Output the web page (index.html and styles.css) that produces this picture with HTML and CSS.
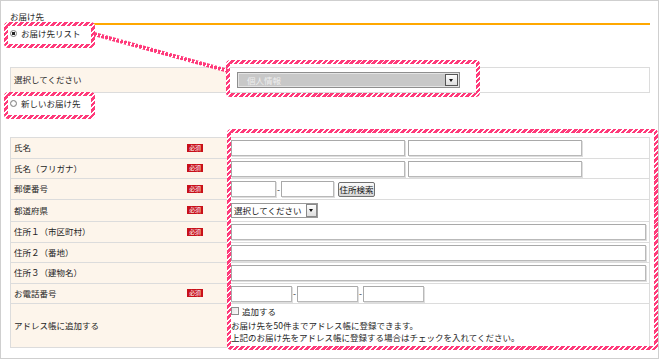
FILE: index.html
```html
<!DOCTYPE html>
<html lang="ja">
<head>
<meta charset="utf-8">
<title>お届け先</title>
<link rel="stylesheet" href="styles.css">
</head>
<body>
  <h2 class="title">お届け先</h2>

  <label class="radio-row first"><span class="radio checked"></span>お届け先リスト</label>

  <div class="grid list">
    <div class="lbl">選択してください</div>
    <div class="val list-val">
      <div class="select disabled"><span class="sel-text">個人情報</span><span class="arrow"></span></div>
    </div>
  </div>

  <label class="radio-row second"><span class="radio"></span>新しいお届け先</label>

  <div class="grid form">
    <div class="lbl">氏名<span class="req">必須</span></div>
    <div class="val"><input class="in w174" type="text"><input class="in w174" type="text"></div>

    <div class="lbl">氏名（フリガナ）<span class="req">必須</span></div>
    <div class="val"><input class="in w174" type="text"><input class="in w174" type="text"></div>

    <div class="lbl">郵便番号<span class="req">必須</span></div>
    <div class="val"><input class="in w45" type="text"><span class="dash">-</span><input class="in w53" type="text"><button class="btn" type="button">住所検索</button></div>

    <div class="lbl">都道府県<span class="req">必須</span></div>
    <div class="val tall"><div class="select pref"><span class="sel-text">選択してください</span><span class="arrow"></span></div></div>

    <div class="lbl">住所１（市区町村）<span class="req">必須</span></div>
    <div class="val"><input class="in full" type="text"></div>

    <div class="lbl">住所２（番地）</div>
    <div class="val"><input class="in full" type="text"></div>

    <div class="lbl">住所３（建物名）</div>
    <div class="val"><input class="in full" type="text"></div>

    <div class="lbl">お電話番号<span class="req">必須</span></div>
    <div class="val"><input class="in w61" type="text"><span class="dash">-</span><input class="in w61" type="text"><span class="dash">-</span><input class="in w61" type="text"></div>

    <div class="lbl">アドレス帳に追加する</div>
    <div class="val note">
      <label class="check-row"><span class="checkbox"></span>追加する</label>
      <p class="note-line first-line">お届け先を50件までアドレス帳に登録できます。</p>
      <p class="note-line">上記のお届け先をアドレス帳に登録する場合はチェックを入れてください。</p>
    </div>
  </div>

  <div class="mark box1"></div>
  <div class="mark box2"></div>
  <div class="mark box3"></div>
  <div class="mark box4"></div>
  <div class="connector"></div>
</body>
</html>
```

FILE: styles.css
```css
html, body {
  margin: 0;
}

body {
  width: 659px;
  height: 359px;
  box-sizing: border-box;
  border: 1px solid #cfcfcf;
  padding: 0 8px 0 9px;
  font-family: "Noto Sans CJK JP", "Noto Sans", sans-serif;
  font-size: 8.5px;
  color: #1e1e1e;
  background: #fff;
  overflow: hidden;
}

.title {
  margin: 0;
  padding: 10px 0 1px;
  font-size: 8.5px;
  font-weight: normal;
  line-height: 11px;
  border-bottom: 2px solid #ffa800;
}

.radio-row {
  display: flex;
  align-items: center;
  height: 11px;
  line-height: 11px;
  gap: 4px;
}

.radio-row.first {
  margin-top: 3px;
}

.radio-row.second {
  margin-top: 5px;
}

.radio {
  width: 7px;
  height: 7px;
  box-sizing: border-box;
  border: 1px solid #7e7e7e;
  border-radius: 50%;
  background: radial-gradient(circle, #fff 0 35%, #d8d8d8 100%);
  flex: none;
}

.radio.checked {
  background: radial-gradient(circle, #222 0 1.6px, #fff 2px);
}

.grid {
  display: grid;
  grid-template-columns: 217px 1fr;
  border: 1px solid #dcdcdc;
  border-bottom: 0;
}

.grid.list {
  margin-top: 28px;
}

.grid.form {
  margin-top: 28.5px;
}

.lbl {
  display: flex;
  align-items: center;
  justify-content: space-between;
  padding: 0 24px 0 3px;
  background: #fdf5eb;
  border-right: 1px solid #dcdcdc;
  border-bottom: 1px solid #dcdcdc;
  line-height: 11px;
}

.val {
  display: flex;
  align-items: center;
  padding: 2px 3px 1.5px;
  border-bottom: 1px solid #dcdcdc;
  background: #fff;
}

.val.list-val {
  padding: 4px 3px 3.5px 9px;
}

.val.tall {
  padding: 3px 3px 3.5px;
}

.req {
  display: inline-block;
  width: 16px;
  height: 8px;
  background: #c8101a;
  color: #fff;
  font-size: 6px;
  line-height: 8px;
  text-align: center;
  letter-spacing: -0.3px;
}

.in {
  box-sizing: border-box;
  height: 16px;
  margin: 0;
  padding: 0 2px;
  border: 1px solid #a9a9a9;
  border-right-color: #b9b9b9;
  border-bottom-color: #b9b9b9;
  box-shadow: 1px 1px 0 #dedede;
  background: #fff;
  font: inherit;
  outline: none;
}

.w174 { width: 174px; margin-right: 3px; }
.w45 { width: 45px; }
.w53 { width: 53px; }
.w61 { width: 61px; }
.full { width: 100%; }

.dash {
  width: 5px;
  text-align: center;
  line-height: 11px;
}

.btn {
  box-sizing: border-box;
  width: 37px;
  height: 15px;
  margin: 0 0 0 4px;
  padding: 0;
  border: 1px solid #707070;
  border-radius: 2px;
  background: linear-gradient(#fbfbfb, #d6d6d6);
  font: inherit;
  color: #111;
  line-height: 13px;
}

.select {
  display: flex;
  align-items: stretch;
  box-sizing: border-box;
}

.select.disabled {
  width: 223px;
  height: 16px;
  border: 1px solid #8e8e8e;
  background: #c8c8c8;
  box-shadow: inset 0 0 0 1px #e4e4e4;
}

.select.disabled .sel-text {
  flex: 1;
  padding-left: 9px;
  color: #eeeeee;
  line-height: 14px;
}

.select .arrow {
  position: relative;
  width: 11px;
  box-sizing: border-box;
  border: 1px solid #555;
  background: linear-gradient(#fdfdfd, #dedede);
}

.select.disabled .arrow {
  width: 13px;
  margin: 1px;
}

.select .arrow::after {
  content: "";
  position: absolute;
  left: 50%;
  top: 50%;
  margin: -1px 0 0 -2.5px;
  border-left: 2.5px solid transparent;
  border-right: 2.5px solid transparent;
  border-top: 3px solid #111;
}

.select.pref {
  width: 87px;
  height: 15px;
  border: 1px solid #9a9a9a;
  background: #fff;
}

.select.pref .sel-text {
  flex: 1;
  padding-left: 2px;
  color: #111;
  line-height: 13px;
}

.select.pref .arrow {
  border-color: #888;
  margin: 0;
}

.val.note {
  display: block;
  padding: 1px 3px 4px;
}

.check-row {
  display: flex;
  align-items: center;
  gap: 3px;
  height: 12px;
  line-height: 12px;
}

.checkbox {
  width: 8px;
  height: 8px;
  box-sizing: border-box;
  border: 1px solid #8f8f8f;
  background: linear-gradient(135deg, #e6e6e6, #fafafa);
}

.note-line {
  margin: 0;
  line-height: 11.5px;
}

.note-line.first-line {
  margin-top: 3px;
}

/* annotation overlays */
.mark {
  position: absolute;
  box-sizing: border-box;
  padding: 4px;
  border-radius: 4px;
  background: repeating-linear-gradient(135deg, #ff3a7a 0 2.6px, #ffffff 2.6px 3.9px);
  -webkit-mask: linear-gradient(#000 0 0) content-box, linear-gradient(#000 0 0);
  -webkit-mask-composite: xor;
  mask-composite: exclude;
}

.box1 { left: 4px; top: 22px; width: 91px; height: 26px; }
.box2 { left: 226px; top: 60px; width: 254px; height: 37px; }
.box3 { left: 4px; top: 92px; width: 91px; height: 27px; }
.box4 { left: 227px; top: 129px; width: 431px; height: 221px; }

.connector {
  position: absolute;
  left: 94px;
  top: 32px;
  width: 139px;
  height: 4px;
  transform-origin: 0 50%;
  transform: rotate(15.4deg);
  background: repeating-linear-gradient(90deg, #ff3a7a 0 2.6px, #ffffff 2.6px 3.9px);
}
```
